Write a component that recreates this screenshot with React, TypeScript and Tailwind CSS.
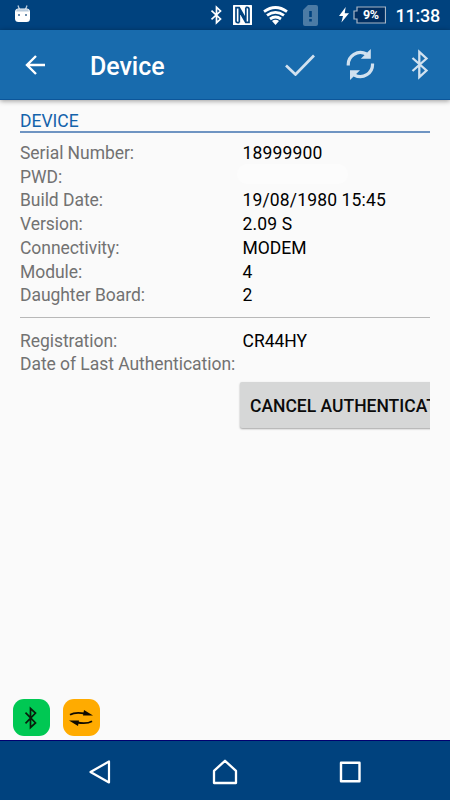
import React from "react";

const deviceRows = [
  ["Serial Number:", "18999900"],
  ["PWD:", ""],
  ["Build Date:", "19/08/1980 15:45"],
  ["Version:", "2.09 S"],
  ["Connectivity:", "MODEM"],
  ["Module:", "4"],
  ["Daughter Board:", "2"],
];

const registrationRows = [
  ["Registration:", "CR44HY"],
  ["Date of Last Authentication:", ""],
];

function Rows({ rows }: { rows: string[][] }) {
  return (
    <dl>
      {rows.map(([label, value]) => (
        <div key={label} className="flex h-[23.75px] items-center whitespace-nowrap text-[17.5px] leading-[23.75px]">
          <dt className="w-[222.5px] shrink-0 tracking-[-0.05px] text-[#727272]">{label}</dt>
          {value ? (
            <dd className={/^\d/.test(value) ? "tracking-[0.15px] text-black" : "text-black"}>{value}</dd>
          ) : label === "PWD:" ? (
            <dd className="-ml-[6px] -mt-[6px] h-[20px] w-[111px] rounded-full bg-[#fcfcfc]" />
          ) : null}
        </div>
      ))}
    </dl>
  );
}

function StatusBar() {
  return (
    <div className="flex h-[30px] shrink-0 items-center bg-[#00427e] text-white">
      <svg className="ml-[14px]" width="17" height="20" viewBox="0 0 17 20">
        <path d="M4 0.5l1.5 4M13 0.5l-1.5 4" stroke="#b9cbdc" strokeWidth="1.3" />
        <rect x="1" y="3.5" width="15" height="13.5" rx="3.5" fill="white" />
        <path d="M3 4.2h11l1 2.3H2z" fill="#b9cbdc" />
        <path d="M4 9h2v2H4zM11 9h2v2h-2z" fill="#6c8dad" />
      </svg>
      <svg className="ml-[179px]" width="13" height="20" viewBox="0 0 13 20" fill="none" stroke="white" strokeWidth="1.7">
        <path d="M1.5 5.7l9 8.3-4 3.7V2.3l4 3.7-9 8.3" />
      </svg>
      <svg className="ml-[10px]" width="19" height="20" viewBox="0 0 19 20">
        <rect width="19" height="20" rx="0.5" fill="white" />
        <path d="M6.3 17.6H4.8q-1.8 0-1.8-1.8V2.6h3.2l6.6 11.6V2.6M12.8 2.4h1.4q1.8 0 1.8 1.8v13.2h-3.2L6.3 6v11.6" fill="none" stroke="#00427e" strokeWidth="1.7" />
      </svg>
      <svg className="ml-[11px]" width="25" height="20" viewBox="0 0 25 20" fill="none" stroke="white" strokeWidth="2.8">
        <path d="M1 6.6Q12.5-1.6 24 6.6M4 10.4q8.5-6.1 17 0M7 14q5.5-4 11 0" />
        <path d="M9 16q3.5-2.4 7 0l-3.5 4z" fill="white" stroke="none" />
      </svg>
      <svg className="ml-[15px]" width="15" height="21" viewBox="0 0 15 21">
        <path d="M5 0h8a2 2 0 0 1 2 2v17a2 2 0 0 1-2 2H2a2 2 0 0 1-2-2V5z" fill="#4c7ba5" />
        <path d="M6.2 6h2.6v6H6.2zM6.2 14h2.6v2.5H6.2z" fill="#00427e" />
      </svg>
      <svg className="ml-[21px]" width="10" height="16" viewBox="0 0 10 16" fill="white">
        <path d="M6.7 0L0 9h4L2.4 15.5 10 6.3H5.7z" />
      </svg>
      <div className="relative ml-[4px] h-[18px] w-[33px]">
        <svg className="absolute inset-0" width="33" height="18" viewBox="0 0 33 18">
          <path d="M4 1h28.5v16H4v-4H1V5h3z" fill="#002e61" stroke="#a8b6c6" strokeWidth="1.2" />
        </svg>
        <span className="absolute left-[10px] top-[2px] text-[12.5px] font-bold leading-[14px] tracking-[-0.3px]">9%</span>
      </div>
      <span className="ml-[9.5px] pt-[2px] text-[18px] font-medium leading-[28px] tracking-[-0.25px]">11:38</span>
    </div>
  );
}

function AppBar() {
  return (
    <header className="z-10 flex h-[70px] shrink-0 items-center border-b border-[#0c569a] bg-[#186bad] text-white shadow-[0_1px_5px_rgba(0,0,0,0.4)]">
      <svg className="ml-[25px] mt-px" width="21" height="20" viewBox="0 0 21 20" fill="none" stroke="white" strokeWidth="2.4">
        <path d="M11 1L2 10l9 9M2 10h18" />
      </svg>
      <h1 className="ml-[44px] mt-[4px] w-[150px] text-[25px] font-medium leading-8 tracking-[-0.05px]">Device</h1>
      <svg className="ml-[45px]" width="30" height="22" viewBox="0 0 30 22" fill="none" stroke="#d1e1ef" strokeWidth="2.7">
        <path d="M1 11.5l9.5 9L29 1.5" />
      </svg>
      <svg className="ml-[31px]" width="29" height="31" viewBox="0 0 29 31" fill="none" stroke="#d1e1ef" strokeWidth="3.2">
        <path d="M2.3 16.5A12.2 12.2 0 0 1 20.5 5M26.5 14.5A12.2 12.2 0 0 1 8.3 26" />
        <path d="M24.8 0v9.8h-10zM4 31v-9.8h10z" fill="#d1e1ef" stroke="none" />
      </svg>
      <svg className="ml-[36px]" width="18" height="31" viewBox="0 0 18 31" fill="none" stroke="#d1e1ef" strokeWidth="2.3">
        <path d="M1.5 9l14 12.5-7.2 6.7V2.8l7.2 6.7L1.5 22" />
      </svg>
    </header>
  );
}

export default function App() {
  return (
    <div className="flex h-[800px] w-[450px] flex-col overflow-hidden bg-[#fafafa] font-[Roboto,sans-serif]">
      <StatusBar />
      <AppBar />
      <main className="flex-1 overflow-hidden px-5 pt-[10px]">
        <h2 className="h-[21px] text-[17.5px] leading-[22px] text-[#1463ab]">DEVICE</h2>
        <div className="h-[1.5px] bg-[#6f94c2]" />
        <div className="mt-[9.35px]">
          <Rows rows={deviceRows} />
        </div>
        <div className="mb-[11.3px] mt-[8.65px] h-[1.5px] bg-[#b8b8b8]" />
        <Rows rows={registrationRows} />
        <div className="ml-[217px] mt-[1.7px] h-[56px] overflow-hidden pl-[3px] pt-[3px]">
          <button className="h-[46px] w-[235px] whitespace-nowrap rounded-[2px] bg-[#d6d7d7] pl-[10px] pt-[3px] text-left text-[17.5px] font-medium text-[#0b0b0b] shadow-[0_1px_2px_rgba(0,0,0,0.35)]">
            CANCEL AUTHENTICATION
          </button>
        </div>
      </main>
      <footer className="flex h-[41px] shrink-0 gap-[13px] pl-[12.5px]">
        <div className="flex h-[37px] w-[37px] items-center justify-center rounded-[11px] bg-[#00c853]">
          <svg width="14" height="24" viewBox="0 0 14 24" fill="none" stroke="#071e0c" strokeWidth="1.7">
            <path d="M1.5 6.7l10 10.3-5 4.5V2.5l5 4.5-10 10.3" />
          </svg>
        </div>
        <div className="flex h-[37px] w-[37px] items-center justify-center rounded-[11px] bg-[#ffab00]">
          <svg width="24" height="16" viewBox="0 0 24 16" fill="none" stroke="#100b00" strokeWidth="1.8">
            <path d="M1 4.8Q6 1.6 16 3.5M23 11.2Q18 14.4 8 12.5" />
            <path d="M15 0l9 5.5h-10zM9 16L0 10.5h10z" fill="#100b00" stroke="none" />
          </svg>
        </div>
      </footer>
      <nav className="flex h-[60px] shrink-0 items-center border-t border-[#000070] bg-[#00427e] pt-[3px]">
        <svg className="ml-[89px]" width="22" height="24" viewBox="0 0 22 24" fill="none" stroke="white" strokeWidth="2.2" strokeLinejoin="round">
          <path d="M20 1.5v21L1.5 12z" />
        </svg>
        <svg className="ml-[101px]" width="26" height="26" viewBox="0 0 26 26" fill="none" stroke="white" strokeWidth="2.3" strokeLinejoin="round">
          <path d="M2 11.8L13 1.8l11 10V24H2z" />
        </svg>
        <svg className="ml-[101px]" width="23" height="22" viewBox="0 0 23 22" fill="none" stroke="white" strokeWidth="2.4" strokeLinejoin="round">
          <path d="M2 1.7h18.5v18.5H2z" />
        </svg>
      </nav>
    </div>
  );
}
